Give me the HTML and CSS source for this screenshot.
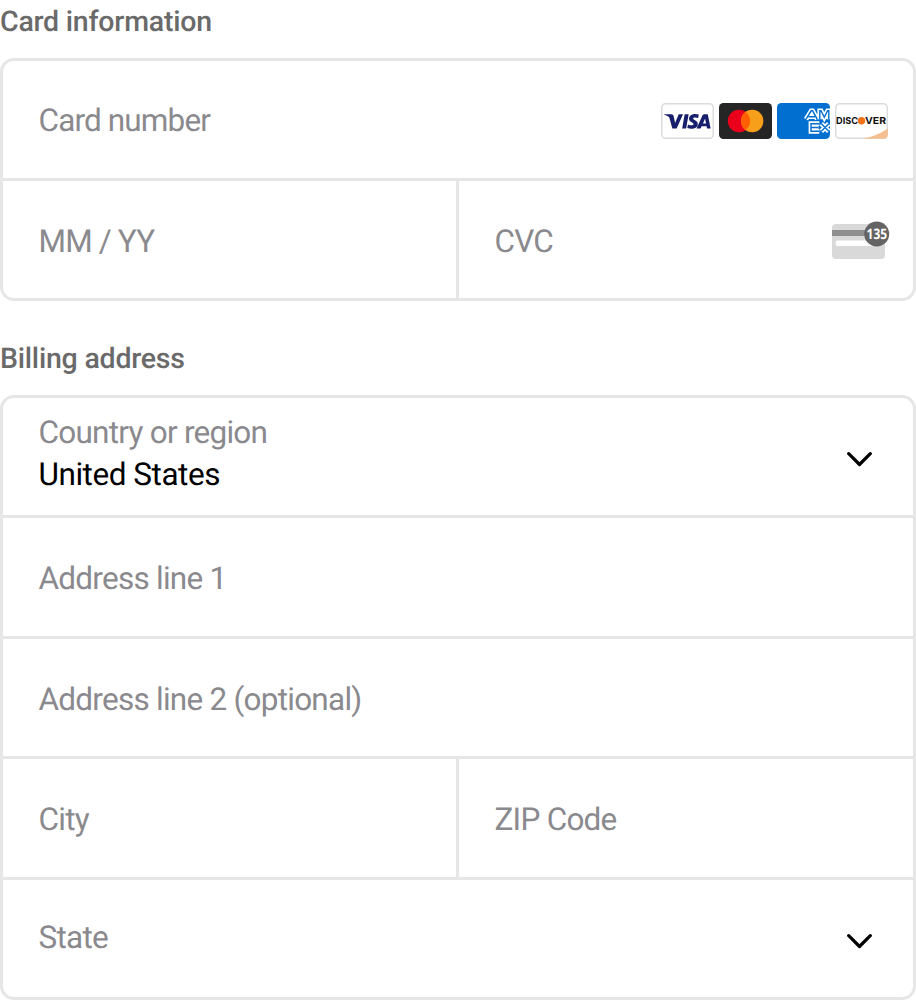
FILE: index.html
```html
<!DOCTYPE html>
<html lang="en">
<head>
<meta charset="utf-8">
<title>Payment details</title>
<link rel="stylesheet" href="styles.css">
</head>
<body>
<main class="form">
  <h2 class="heading">Card information</h2>
  <section class="group card-group">
    <div class="cell wide">
      <span class="label">Card number</span>
      <div class="brands">
        <svg class="brand" viewBox="0 0 53 36"><rect x=".75" y=".75" width="51.5" height="34.5" rx="3.8" fill="#fff" stroke="#dcdcdc" stroke-width="1.5"/><path transform="translate(.3 .2) scale(.97 1)" fill="#171e6c" d="M3 11h7.5q1.8 0 2.2 1.8l1.5 7.1L18 11h4.4l-6.6 14.4h-4.4L8.2 14Q6.200 12.200 3 11.500zM24.100 11h4.100l-2.600 14.400h-4.100zM38.600 11.400l-.6 3.400c-2-.8-5.200-1-5.200.5 0 1.400 4.800 1.900 4.800 5.400 0 4.900-6.800 5.800-10.800 4.100l.7-3.500c2.600 1.300 5.800 1.100 5.800-.4 0-1.600-4.700-1.800-4.700-5.300 0-4.500 5.900-5.600 10-4.200zM44.400 11h3.500l3 14.400h-3.800l-.4-2.300h-5.200l-.9 2.300h-4.300l6.100-13q.6-1.400 2-1.400zm.7 4.300-2.100 4.900h3.100z"/></svg>
        <svg class="brand" viewBox="0 0 53 36"><rect width="53" height="36" rx="4.500" fill="#252525"/><circle cx="20" cy="18" r="11.200" fill="#eb001b"/><circle cx="33.200" cy="18" r="11.200" fill="#f79e1b"/><path fill="#ff5f00" d="M26.600 9a11.200 11.200 0 0 1 0 18 11.200 11.200 0 0 1 0-18z"/></svg>
        <svg class="brand" viewBox="0 0 53 36"><defs><g id="amex-letters"><path d="M29 16.200 34.200 7.800h1.400l4.600 8.400M31.500 13.700h6.500M42.800 16.200V7.800h1.200l3.300 6.400 3.300-6.400h1.200v8.400M42.300 20.700h-8.300v7.600h8.300M34 24.500h7.500M44.300 20.700l7.500 7.600M51.800 20.700l-7.500 7.600"/></g></defs><rect width="53" height="36" rx="4.500" fill="#016fd0"/><use href="#amex-letters" fill="none" stroke="#fff" stroke-width="4.800"/><use href="#amex-letters" fill="none" stroke="#016fd0" stroke-width="1.400"/></svg>
        <svg class="brand" viewBox="0 0 53 36"><rect x=".75" y=".75" width="51.500" height="34.500" rx="3.800" fill="#fff" stroke="#dcdcdc" stroke-width="1.500"/><path fill="#f5be91" d="M28 35.800Q43 32.500 52.800 25.500v6.300q0 4-4 4z"/><text class="discover" x="1" y="21.400" textLength="22" lengthAdjust="spacingAndGlyphs">DISC</text><circle cx="26.500" cy="17.800" r="3.700" fill="#f47216"/><text class="discover" x="30" y="21.400" textLength="21" lengthAdjust="spacingAndGlyphs">VER</text></svg>
      </div>
    </div>
    <div class="cell"><span class="label">MM / YY</span></div>
    <div class="cell">
      <span class="label">CVC</span>
      <svg class="cvc" viewBox="0 0 58 40"><rect y="4" width="53" height="35" rx="4" fill="#d9d9d9"/><path fill="#8e8e8e" d="M0 10h53v6H0z"/><rect x="3.500" y="20.500" width="40" height="5.500" rx="2" fill="#fff"/><circle cx="44.700" cy="14" r="12.500" fill="#646464"/><text class="digits" x="34.600" y="19.200" textLength="20.500" lengthAdjust="spacingAndGlyphs">135</text></svg>
    </div>
  </section>
  <h2 class="heading second">Billing address</h2>
  <section class="group address-group">
    <div class="cell wide country">
      <div class="stack"><span class="label">Country or region</span><span class="value">United States</span></div>
      <svg class="chevron" viewBox="0 0 26 16"><path d="M2.700 1.700 13.500 12.500 24.300 1.700"/></svg>
    </div>
    <div class="cell wide"><span class="label">Address line 1</span></div>
    <div class="cell wide line-two"><span class="label">Address line 2 (optional)</span></div>
    <div class="cell"><span class="label">City</span></div>
    <div class="cell"><span class="label">ZIP Code</span></div>
    <div class="cell wide state">
      <span class="label">State</span>
      <svg class="chevron" viewBox="0 0 26 16"><path d="M2.700 1.700 13.500 12.500 24.300 1.700"/></svg>
    </div>
  </section>
</main>
</body>
</html>
```
FILE: styles.css
```css
* { box-sizing: border-box; }
body { margin: 0; background: #fff; font-family: Roboto, sans-serif; text-rendering: geometricPrecision; }
.form { display: flex; flex-direction: column; width: 916px; height: 1000px; overflow: hidden; }
.heading { margin: 0; height: 58px; padding-top: 5px; font-size: 28.5px; line-height: 33px; font-weight: 500; letter-spacing: -.22px; color: #6a6a6a; white-space: nowrap; }
.second { height: 94px; padding-top: 41px; }
.group {
  display: grid;
  grid-template-columns: 453px 454px;
  gap: 3px;
  border: 3px solid #e6e6e6;
  border-radius: 14px;
  background: #e6e6e6;
  overflow: hidden;
}
.card-group { grid-template-rows: 117px 117px; }
.address-group { grid-template-rows: 117px 118px 117px 118px 117px; }
.cell { display: flex; align-items: center; justify-content: space-between; padding: 3px 26px 0 35.500px; background: #fff; }
.wide { grid-column: 1 / -1; }
.label, .value { font-size: 31.5px; line-height: 42px; letter-spacing: -.75px; color: #8a8a8e; white-space: nowrap; }
.card-group .label { letter-spacing: -.86px; }
.card-group .cell:not(.wide) .label { padding-top: 1px; }
.line-two { padding-top: 5px; }
.value { color: #000; letter-spacing: -.46px; }
.stack { display: flex; flex-direction: column; margin-top: -6px; }
.country, .state { padding: 0 41px 0 35.500px; }
.state .label { margin-top: -1px; }
.brands { display: flex; gap: 5px; margin-right: -1px; }
.brand { width: 53px; height: 36px; }
.discover { font: 700 9.500px Inter, sans-serif; fill: #111; }
.cvc { width: 58px; height: 40px; margin: -2px -3px 0 0; }
.digits { font: 700 14.500px "Noto Sans", sans-serif; fill: #fff; }
.chevron { width: 26px; height: 16px; margin-top: 6px; fill: none; stroke: #000; stroke-width: 3.200; stroke-linecap: round; stroke-linejoin: round; }
```
